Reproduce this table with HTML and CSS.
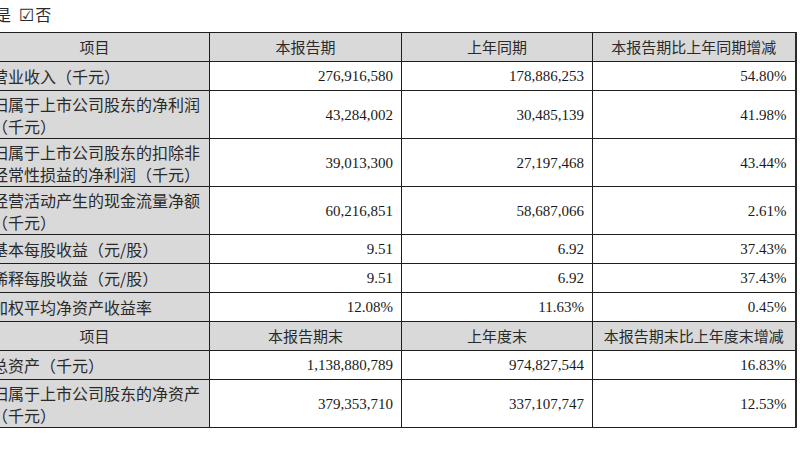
FILE: index.html
```html
<!DOCTYPE html>
<html lang="zh-CN">
<head>
<meta charset="utf-8">
<title>主要会计数据</title>
<link rel="stylesheet" href="styles.css">
</head>
<body>
<div class="choice"><span class="opt">□是</span><span class="opt"><span class="box">☑</span>否</span></div>
<table class="data">
  <colgroup>
    <col class="c1"><col class="c2"><col class="c3"><col class="c4">
  </colgroup>
  <tr class="s head">
    <th>项目</th><th>本报告期</th><th>上年同期</th><th>本报告期比上年同期增减</th>
  </tr>
  <tr class="s">
    <td class="lab">营业收入（千元）</td><td class="num">276,916,580</td><td class="num">178,886,253</td><td class="num">54.80%</td>
  </tr>
  <tr class="d">
    <td class="lab">归属于上市公司股东的净利润（千元）</td><td class="num">43,284,002</td><td class="num">30,485,139</td><td class="num">41.98%</td>
  </tr>
  <tr class="d">
    <td class="lab">归属于上市公司股东的扣除非经常性损益的净利润（千元）</td><td class="num">39,013,300</td><td class="num">27,197,468</td><td class="num">43.44%</td>
  </tr>
  <tr class="d">
    <td class="lab">经营活动产生的现金流量净额（千元）</td><td class="num">60,216,851</td><td class="num">58,687,066</td><td class="num">2.61%</td>
  </tr>
  <tr class="s">
    <td class="lab">基本每股收益（元/股）</td><td class="num">9.51</td><td class="num">6.92</td><td class="num">37.43%</td>
  </tr>
  <tr class="s">
    <td class="lab">稀释每股收益（元/股）</td><td class="num">9.51</td><td class="num">6.92</td><td class="num">37.43%</td>
  </tr>
  <tr class="s">
    <td class="lab">加权平均净资产收益率</td><td class="num">12.08%</td><td class="num">11.63%</td><td class="num">0.45%</td>
  </tr>
  <tr class="s head">
    <th>项目</th><th>本报告期末</th><th>上年度末</th><th>本报告期末比上年度末增减</th>
  </tr>
  <tr class="s">
    <td class="lab">总资产（千元）</td><td class="num">1,138,880,789</td><td class="num">974,827,544</td><td class="num">16.83%</td>
  </tr>
  <tr class="d">
    <td class="lab">归属于上市公司股东的净资产（千元）</td><td class="num">379,353,710</td><td class="num">337,107,747</td><td class="num">12.53%</td>
  </tr>
</table>
</body>
</html>
```
FILE: styles.css
```css
html, body {
  margin: 0;
  padding: 0;
  background: #ffffff;
}
body {
  width: 800px;
  height: 450px;
  overflow: hidden;
  color: #1e1e1e;
  font-family: "Liberation Serif", "Noto Sans CJK SC", serif;
}
.choice {
  display: flex;
  gap: 8px;
  margin-left: -21px;
  height: 32px;
  padding-top: 5px;
  box-sizing: border-box;
  font-family: "Noto Sans CJK SC", sans-serif;
  font-size: 16px;
  line-height: 18px;
  color: #2a2a2a;
}
.box {
  font-family: "DejaVu Sans", sans-serif;
  font-size: 17px;
  margin-right: 1px;
}
.data {
  border-collapse: collapse;
  table-layout: fixed;
  width: 816px;
  margin-left: -21px;
}
.c1 { width: 230px; }
.c2 { width: 192px; }
.c3 { width: 191px; }
.c4 { width: 203px; }
.data th, .data td {
  border: 1px solid #1e1e1e;
  padding: 0 8px;
  vertical-align: middle;
}
.data tr > :last-child {
  border-right: 2px solid #2a2a2a;
}
.s { height: 29px; }
.d { height: 48px; }
.data th {
  background: #d9d9d9;
  font-family: "Noto Sans CJK SC", sans-serif;
  font-weight: 400;
  font-size: 15px;
  line-height: 20px;
  text-align: center;
  white-space: nowrap;
  padding: 0 4px;
  color: #2a2a2a;
}
.lab {
  background: #d9d9d9;
  font-family: "Noto Sans CJK SC", sans-serif;
  font-size: 16px;
  line-height: 22px;
  text-align: left;
  padding-left: 12px !important;
  padding-right: 4px !important;
  color: #2a2a2a;
}
.num {
  text-align: right;
  font-family: "Liberation Serif", serif;
  font-size: 15px;
  line-height: 20px;
  color: #1a1a1a;
}
```
